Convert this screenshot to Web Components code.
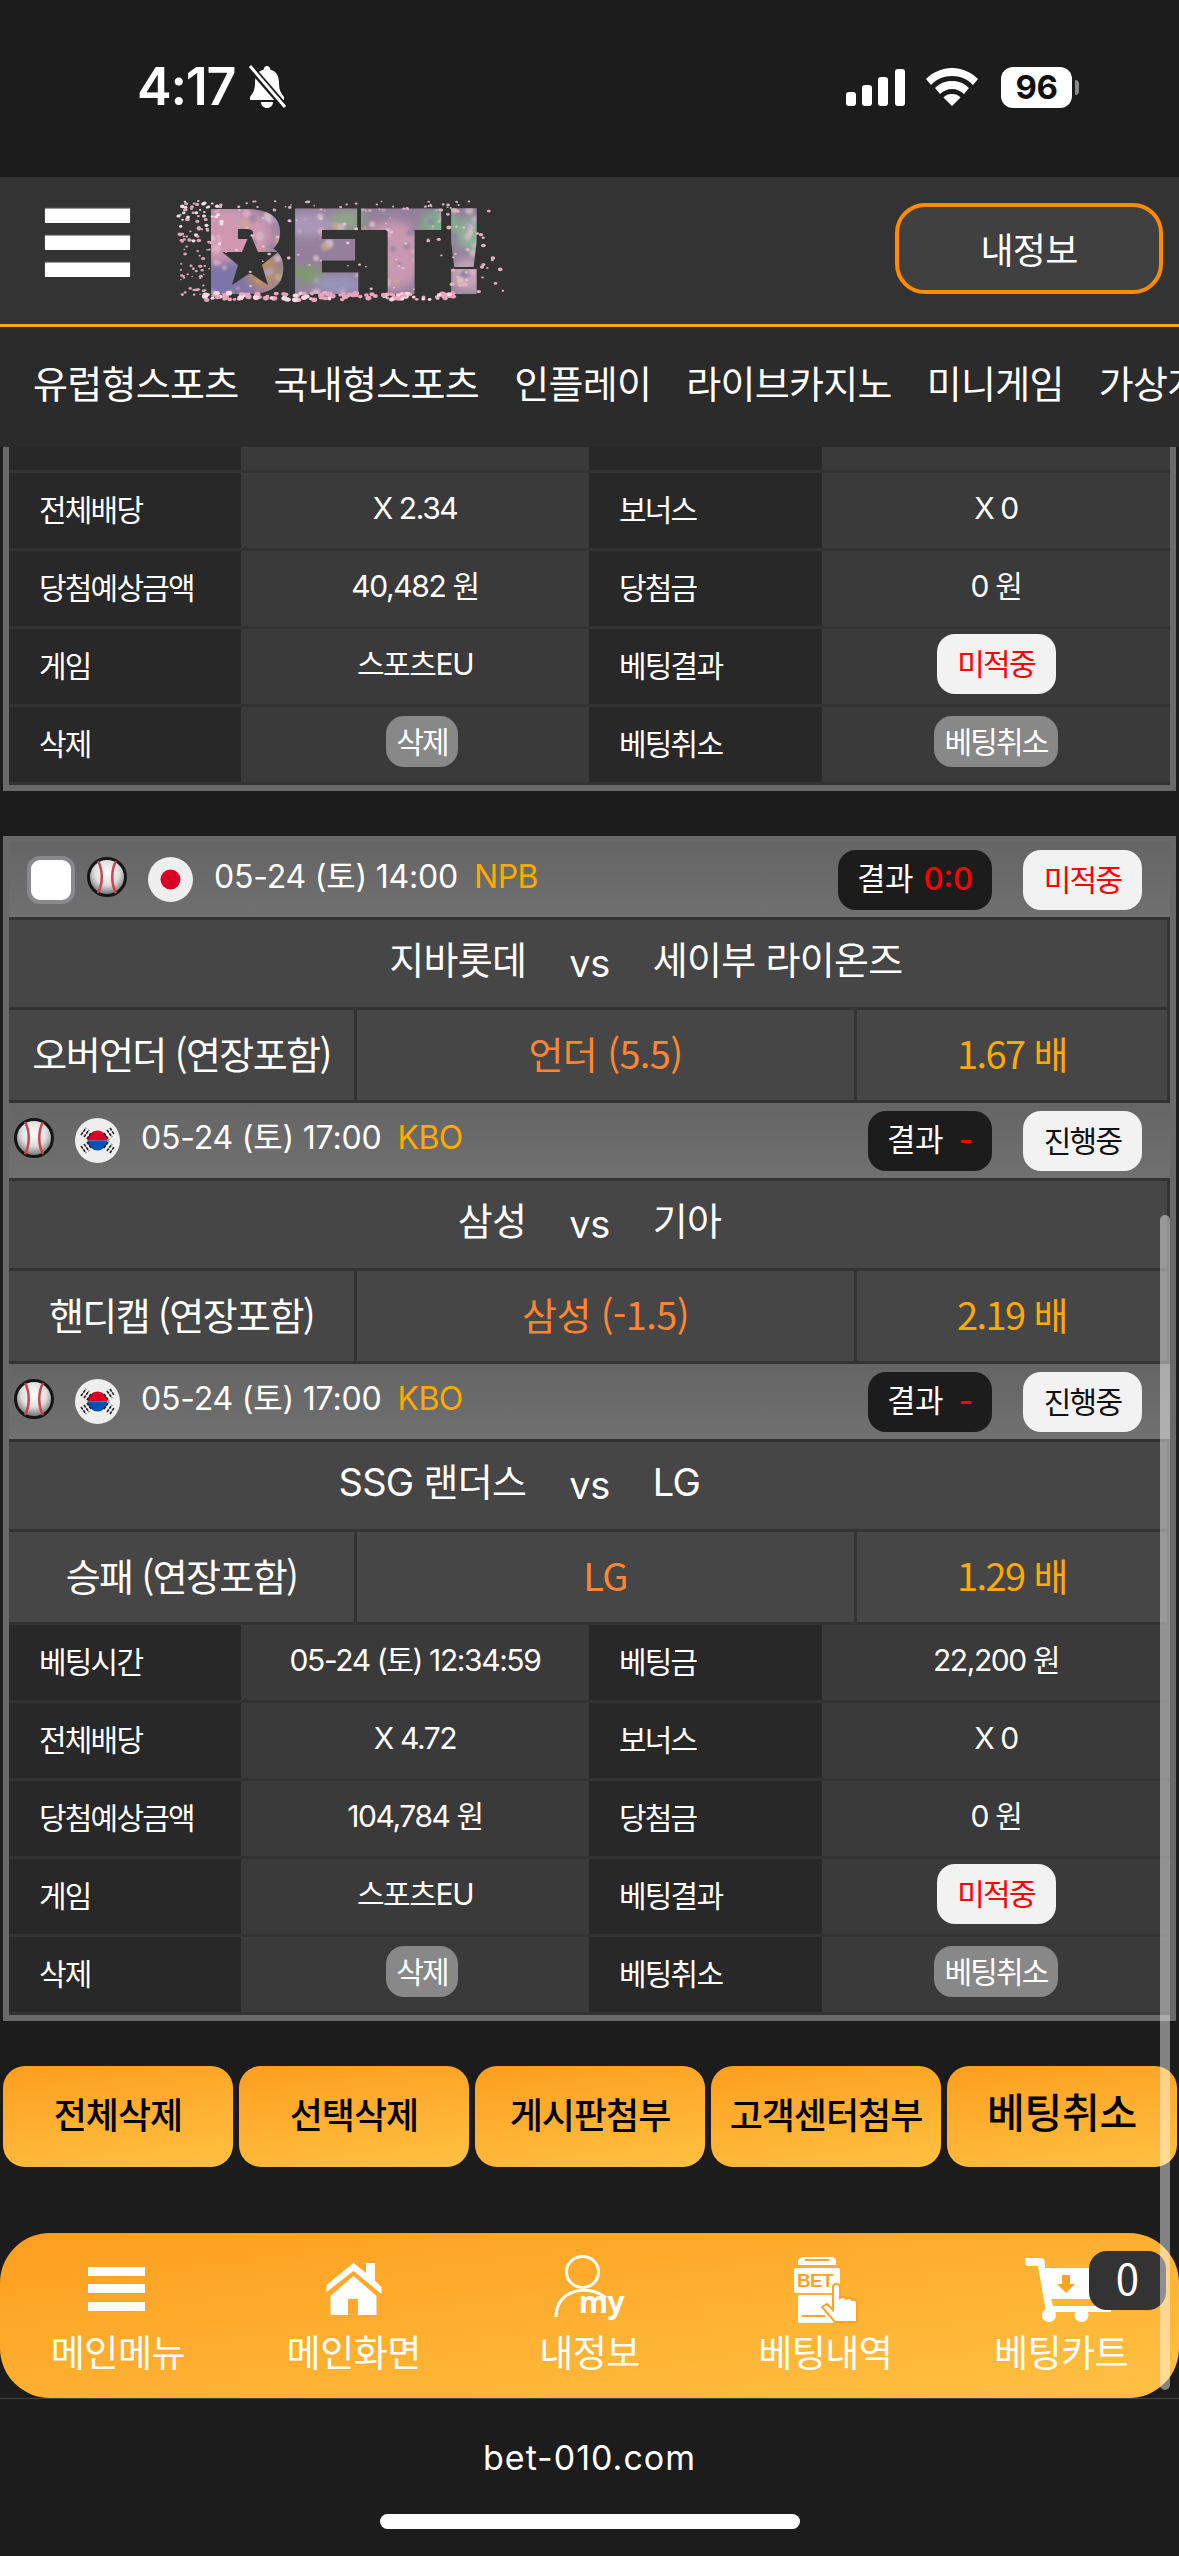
<!DOCTYPE html>
<html lang="ko">
<head>
<meta charset="utf-8">
<title>bet-010.com</title>
<style>
html, body { margin: 0; padding: 0; background: #1c1c1c; }
body {
    width: 1179px;
    height: 2556px;
    overflow: hidden;
    position: relative;
    color: #fff;
    font-family: "Noto Sans CJK KR", "Noto Sans", sans-serif;
}
</style>
</head>
<body>

<status-bar></status-bar>
<site-header></site-header>
<main-nav>
    <span>유럽형스포츠</span><span>국내형스포츠</span><span>인플레이</span><span>라이브카지노</span><span>미니게임</span><span>가상게임</span>
</main-nav>

<bet-card class="first">
    <info-row short></info-row>
    <info-row>
        <info-cell label>전체배당</info-cell><info-cell>X 2.34</info-cell>
        <info-cell label>보너스</info-cell><info-cell>X 0</info-cell>
    </info-row>
    <info-row>
        <info-cell label>당첨예상금액</info-cell><info-cell>40,482 원</info-cell>
        <info-cell label>당첨금</info-cell><info-cell>0 원</info-cell>
    </info-row>
    <info-row>
        <info-cell label>게임</info-cell><info-cell>스포츠EU</info-cell>
        <info-cell label>베팅결과</info-cell><info-cell><pill-badge tone="miss">미적중</pill-badge></info-cell>
    </info-row>
    <info-row>
        <info-cell label>삭제</info-cell><info-cell><pill-badge tone="gray" class="nudge">삭제</pill-badge></info-cell>
        <info-cell label>베팅취소</info-cell><info-cell><pill-badge tone="gray">베팅취소</pill-badge></info-cell>
    </info-row>
</bet-card>

<bet-card class="second">
    <match-head check flag="jp" date="05-24 (토) 14:00" league="NPB" score="0:0" state="미적중" tone="miss"></match-head>
    <match-teams home="지바롯데" away="세이부 라이온즈"></match-teams>
    <match-pick market="오버언더 (연장포함)" pick="언더 (5.5)" odds="1.67 배"></match-pick>

    <match-head flag="kr" date="05-24 (토) 17:00" league="KBO" score="-" state="진행중" tone="live"></match-head>
    <match-teams home="삼성" away="기아"></match-teams>
    <match-pick market="핸디캡 (연장포함)" pick="삼성 (-1.5)" odds="2.19 배"></match-pick>

    <match-head flag="kr" date="05-24 (토) 17:00" league="KBO" score="-" state="진행중" tone="live"></match-head>
    <match-teams home="SSG 랜더스" away="LG"></match-teams>
    <match-pick market="승패 (연장포함)" pick="LG" odds="1.29 배"></match-pick>

    <info-row>
        <info-cell label>베팅시간</info-cell><info-cell>05-24 (토) 12:34:59</info-cell>
        <info-cell label>베팅금</info-cell><info-cell>22,200 원</info-cell>
    </info-row>
    <info-row>
        <info-cell label>전체배당</info-cell><info-cell>X 4.72</info-cell>
        <info-cell label>보너스</info-cell><info-cell>X 0</info-cell>
    </info-row>
    <info-row>
        <info-cell label>당첨예상금액</info-cell><info-cell>104,784 원</info-cell>
        <info-cell label>당첨금</info-cell><info-cell>0 원</info-cell>
    </info-row>
    <info-row>
        <info-cell label>게임</info-cell><info-cell>스포츠EU</info-cell>
        <info-cell label>베팅결과</info-cell><info-cell><pill-badge tone="miss">미적중</pill-badge></info-cell>
    </info-row>
    <info-row>
        <info-cell label>삭제</info-cell><info-cell><pill-badge tone="gray" class="nudge">삭제</pill-badge></info-cell>
        <info-cell label>베팅취소</info-cell><info-cell><pill-badge tone="gray">베팅취소</pill-badge></info-cell>
    </info-row>
</bet-card>

<action-bar>
    <action-button>전체삭제</action-button>
    <action-button>선택삭제</action-button>
    <action-button>게시판첨부</action-button>
    <action-button>고객센터첨부</action-button>
    <action-button big>베팅취소</action-button>
</action-bar>

<bottom-nav></bottom-nav>
<url-bar>bet-010.com</url-bar>
<page-scrollbar></page-scrollbar>

<script>
const KR_FONT = '"Noto Sans CJK KR", "Noto Sans", sans-serif';
// digits and latin are wider on the site, hangul still falls through to noto
const NUM_FONT = 'Inter, "Noto Sans CJK KR", sans-serif';

// small helper, every element just sets its html once
class ShadowEl extends HTMLElement {
    render(html) {
        const root = this.shadowRoot || this.attachShadow({ mode: 'open' });
        root.innerHTML = html;
    }
}

class StatusBar extends ShadowEl {
    connectedCallback() {
        this.render(`
<style>
:host { display: flex; align-items: center; height: 177px; box-sizing: border-box; padding: 0 107px 3px 137px; background: #1c1c1c; }
.time { font: 600 52px/1 Inter, Roboto, sans-serif; letter-spacing: -1.2px; color: #fff; }
.bell { margin-left: 11px; }
.right { margin-left: auto; display: flex; align-items: center; }
.batt { position: relative; width: 71px; height: 41px; margin-left: 23px; border-radius: 12px; background: #fff; color: #111;
    display: flex; align-items: center; justify-content: center; font: 700 33px/1 Inter, Roboto, sans-serif; letter-spacing: -.5px; }
.batt::after { content: ""; position: absolute; left: 74px; top: 13px; width: 4px; height: 15px; border-radius: 0 4px 4px 0; background: #8a8a8a; }
</style>
<span class="time">4:17</span>
<svg class="bell" width="42" height="44" viewBox="0 0 42 44">
    <path d="M21 1c2 0 3 1.500 3.300 3.500C31 6.500 33 12 33 18c0 7 2 10 5 14v3H4v-3c3-4 5-7 5-14 0-6 2-11.500 8.700-13.500C18 2.500 19 1 21 1z" fill="#fff"/>
    <path d="M15 37h12c0 3.500-2.700 6-6 6s-6-2.500-6-6z" fill="#fff"/>
    <path d="M5 3l33 38" stroke="#1c1c1c" stroke-width="7"/>
    <path d="M4 1l35 41" stroke="#fff" stroke-width="3"/>
</svg>
<div class="right">
    <svg width="60" height="37" viewBox="0 0 60 37">
        <rect x="0" y="23" width="10" height="14" rx="3" fill="#fff"/>
        <rect x="16" y="16" width="10" height="21" rx="3" fill="#fff"/>
        <rect x="32" y="8" width="10" height="29" rx="3" fill="#fff"/>
        <rect x="49" y="0" width="10" height="37" rx="3" fill="#fff"/>
    </svg>
    <svg width="52" height="38" viewBox="0 0 52 38" style="margin-left:20px">
        <path d="M26 0C16 0 7 4 0 11l5 6c5.500-6 13-9 21-9s15.500 3 21 9l5-6C45 4 36 0 26 0z" fill="#fff"/>
        <path d="M26 13c-7 0-12.500 2.500-17 7l5 6c3-3 7.500-5 12-5s9 2 12 5l5-6c-4.500-4.500-10-7-17-7z" fill="#fff"/>
        <path d="M26 26c-3.500 0-6.500 1-8.500 3.500L26 38l8.500-8.500C32.500 27 29.500 26 26 26z" fill="#fff"/>
    </svg>
    <div class="batt">96</div>
</div>`);
    }
}

class BetLogo extends ShadowEl {
    connectedCallback() {
        // petals are scattered, a fixed seed keeps them the same on every load
        let seed = 7;
        const rnd = () => { seed = (seed * 16807) % 2147483647; return (seed % 10000) / 10000; };
        let petals = '';
        const add = (x, y, r, c) => { petals += `<ellipse cx="${x.toFixed(1)}" cy="${y.toFixed(1)}" rx="${(r * 1.3).toFixed(1)}" ry="${r.toFixed(1)}" fill="${c}"/>`; };
        for (let i = 0; i < 130; i++) add(24 + rnd() * 255, 93 + rnd() * 7, 1.3 + rnd() * 1.2, rnd() > .3 ? '#e8a4bc' : '#f7dbe4');
        for (let i = 0; i < 70; i++) add(rnd() * 44, 1 + rnd() * 44, .9 + rnd(), rnd() > .4 ? '#d9a8ba' : '#f3e3e8');
        for (let i = 0; i < 45; i++) add(40 + rnd() * 270, 1 + rnd() * 10, .7 + rnd() * .7, '#d8b4c2');
        for (let i = 0; i < 40; i++) add(2 + rnd() * 30, 45 + rnd() * 50, .7 + rnd() * .9, '#d8a8ba');
        for (let i = 0; i < 36; i++) add(250 + rnd() * 76, 10 + rnd() * 82, .9 + rnd() * 1.2, '#e6aec0');
        for (let i = 0; i < 40; i++) add(30 + rnd() * 260, 15 + rnd() * 75, .7 + rnd() * .8, '#e8c0d0');
        // blotches so the letters read like a photo and not a smooth gradient
        const tones = ['#e3b6c8', '#b2a0c6', '#d9c0cc', '#8f86a4', '#c9a98c', '#e9cfd8'];
        let blotches = '';
        for (let i = 0; i < 170; i++) {
            blotches += `<circle cx="${(rnd() * 327).toFixed(1)}" cy="${(rnd() * 103).toFixed(1)}" r="${(1.5 + rnd() * 3).toFixed(1)}" fill="${tones[Math.floor(rnd() * tones.length)]}" opacity=".7"/>`;
        }
        this.render(`
<style>:host { display: block; width: 327px; height: 103px; } svg { display: block; overflow: visible; }</style>
<svg width="327" height="103" viewBox="0 0 327 103">
    <defs>
        <filter id="soft"><feGaussianBlur stdDeviation="5"/></filter>
        <filter id="soft2"><feGaussianBlur stdDeviation="1"/></filter>
        <pattern id="photo" patternUnits="userSpaceOnUse" width="327" height="103">
            <rect width="327" height="103" fill="#94809c"/>
            <g filter="url(#soft)">
                <ellipse cx="50" cy="35" rx="45" ry="28" fill="#cf98b0"/>
                <ellipse cx="60" cy="80" rx="40" ry="20" fill="#7d74a8"/>
                <ellipse cx="85" cy="72" rx="16" ry="18" fill="#b88c68"/>
                <ellipse cx="130" cy="25" rx="30" ry="12" fill="#a897b6"/>
                <ellipse cx="170" cy="20" rx="18" ry="10" fill="#8ea488"/>
                <ellipse cx="125" cy="75" rx="22" ry="8" fill="#7f9c68"/>
                <ellipse cx="160" cy="85" rx="25" ry="9" fill="#9894bc"/>
                <ellipse cx="215" cy="55" rx="30" ry="35" fill="#c898b0"/>
                <ellipse cx="262" cy="24" rx="20" ry="12" fill="#7fb08a"/>
                <ellipse cx="295" cy="35" rx="16" ry="18" fill="#8cb494"/>
                <ellipse cx="290" cy="75" rx="18" ry="16" fill="#c8a4b6"/>
            </g>
            <g filter="url(#soft2)">${blotches}</g>
        </pattern>
    </defs>
    <text x="26" y="91" font-family="'DejaVu Sans'" font-weight="700" font-size="108" textLength="285" lengthAdjust="spacingAndGlyphs"
        fill="url(#photo)" stroke="url(#photo)" stroke-width="6" stroke-linejoin="miter">BET!</text>
    <polygon points="72,33 80,52 100,52 84,65 90,85 72,73 54,85 60,65 44,52 64,52" fill="#333"/>
    ${petals}
</svg>`);
    }
}

class SiteHeader extends ShadowEl {
    connectedCallback() {
        this.render(`
<style>
:host { display: flex; align-items: center; box-sizing: border-box; height: 150px; padding: 0 16px 3px 45px; background: #333; border-bottom: 3px solid #ffa800; }
.burger { display: flex; flex-direction: column; gap: 13px; width: 85px; margin-bottom: 12px; }
.burger i { display: block; height: 14px; background: #fff; box-shadow: 0 -1px 1px #999; }
bet-logo { margin-left: 48px; margin-top: 4px; }
.me { margin-left: auto; box-sizing: border-box; width: 268px; height: 91px; margin-bottom: 2px; border: 4px solid #ff8c00; border-radius: 30px; background: #404040;
    display: flex; align-items: center; justify-content: center; font: 400 36px/1 ${KR_FONT}; letter-spacing: -.8px; color: #fff; }
</style>
<div class="burger"><i></i><i></i><i></i></div>
<bet-logo></bet-logo>
<div class="me">내정보</div>`);
    }
}

class MainNav extends ShadowEl {
    connectedCallback() {
        this.render(`
<style>
:host { display: flex; align-items: center; gap: 35px; box-sizing: border-box; height: 120px; padding: 0 0 10px 33px; background: #2b2b2b;
    overflow: hidden; white-space: nowrap; font: 400 38px/1 ${KR_FONT}; letter-spacing: -.7px; color: #fff; }
</style>
<slot></slot>`);
    }
}

class BetCard extends ShadowEl {
    connectedCallback() {
        this.render(`
<style>
:host { display: block; margin: 0 3px; border: 6px solid #696969; background: #333; }
:host(.first) { border-top: 0; }
:host(.second) { margin-top: 45px; }
</style>
<slot></slot>`);
    }
}

class InfoRow extends ShadowEl {
    connectedCallback() {
        this.render(`
<style>
:host { display: grid; grid-template-columns: 232px 348px 233px 348px; height: 75px; margin-bottom: 3px; }
:host([short]) { height: 23px; background: linear-gradient(90deg, #282828 232px, #3a3a3a 232px 580px, #282828 580px 813px, #3a3a3a 813px); }
</style>
<slot></slot>`);
    }
}

class InfoCell extends ShadowEl {
    connectedCallback() {
        this.render(`
<style>
:host { display: flex; align-items: center; justify-content: center; background: #3a3a3a; color: #fff; font: 400 30px/1 ${NUM_FONT}; letter-spacing: -1.400px; white-space: nowrap; }
:host([label]) { justify-content: flex-start; padding-left: 30px; background: #282828; font-family: ${KR_FONT}; letter-spacing: -1.8px; }
.t { display: block; transform: translateY(-3px); }
</style>
<span class="t"><slot></slot></span>`);
    }
}

class PillBadge extends ShadowEl {
    connectedCallback() {
        this.render(`
<style>
:host { display: flex; align-items: center; justify-content: center; box-sizing: border-box; border-radius: 18px; padding-bottom: 3px; font: 400 30px/1 ${KR_FONT}; letter-spacing: -1.8px; }
:host([tone="miss"]) { width: 119px; height: 60px; background: #f2f2f2; color: #f00; }
:host([tone="live"]) { width: 119px; height: 60px; background: #f2f2f2; color: #111; }
:host([tone="gray"]) { height: 51px; padding: 0 10px 3px; background: #888; color: #fff; }
:host(.nudge) { margin-left: 14px; }
</style>
<slot></slot>`);
    }
}

const BALL_SVG = `<svg width="40" height="40" viewBox="0 0 40 40">
    <defs><radialGradient id="b" cx="50%" cy="38%" r="62%"><stop offset="0" stop-color="#fff"/><stop offset=".55" stop-color="#dedede"/><stop offset="1" stop-color="#666"/></radialGradient></defs>
    <circle cx="20" cy="20" r="18.500" fill="url(#b)" stroke="#161616" stroke-width="3"/>
    <path d="M11 4C16 13 16 27 11 36M29 4C24 13 24 27 29 36" fill="none" stroke="#c9444c" stroke-width="2.500"/>
</svg>`;

const FLAGS = {
    jp: `<circle cx="22.500" cy="22.500" r="22.500" fill="#eee"/><circle cx="22.500" cy="22.500" r="10" fill="#d80027"/>`,
    kr: `<circle cx="22.500" cy="22.500" r="22.500" fill="#eee"/>
        <path d="M12.500 22.500a10 10 0 0 1 20 0z" fill="#d80027"/><path d="M12.500 22.500a10 10 0 0 0 20 0z" fill="#0052b4"/>
        <g stroke="#222" stroke-width="1.600" stroke-dasharray="3 1">
            <path d="M6 17l5-7M9 19l5-7M12 21l4-6"/><path d="M29 15l5 7M32 12l5 7M35 10l4 6"/>
            <path d="M6 28l5 7M9 26l5 7M12 24l4 6"/><path d="M29 30l5-7M32 33l5-7M35 35l4-6"/>
        </g>`
};

class MatchHead extends ShadowEl {
    connectedCallback() {
        const check = this.hasAttribute('check');
        const live = this.getAttribute('tone') === 'live';
        this.render(`
<style>
:host { display: flex; align-items: center; height: 75px; margin-bottom: 3px; box-sizing: border-box; padding: 0 28px 0 ${check ? 18 : 5}px;
    background: linear-gradient(#656565, #707070); font: 400 32px/1 ${NUM_FONT}; color: #fff; }
.check { box-sizing: border-box; width: 48px; height: 48px; margin-right: 12px; border: 4px solid #8a8a8e; border-radius: 13px; background: #fff; }
.ball { display: block; flex: none; }
.flag { display: block; flex: none; margin: 0 21px; }
.date { letter-spacing: -.200px; white-space: nowrap; transform: translateY(-3px); }
.league { margin-left: 16px; color: #ffaa00; letter-spacing: -.5px; transform: translateY(-3px); }
.result { margin-left: auto; display: flex; align-items: center; justify-content: space-between; box-sizing: border-box; width: ${live ? 124 : 154}px; height: 60px; padding: 0 19px 3px; border-radius: 18px; background: #1c1c1c;
    font-size: 31px; letter-spacing: -.6px; }
.score { color: #f00; font-weight: 500; letter-spacing: 0; }
pill-badge { margin-left: 31px; }
</style>
${check ? '<div class="check"></div>' : ''}
<span class="ball">${BALL_SVG}</span>
<svg class="flag" width="45" height="45" viewBox="0 0 45 45">${FLAGS[this.getAttribute('flag')]}</svg>
<span class="date">${this.getAttribute('date')}</span>
<span class="league">${this.getAttribute('league')}</span>
<div class="result"><span>결과</span><span class="score">${this.getAttribute('score')}</span></div>
<pill-badge tone="${this.getAttribute('tone')}">${this.getAttribute('state')}</pill-badge>`);
    }
}

class MatchTeams extends ShadowEl {
    connectedCallback() {
        this.render(`
<style>
:host { display: grid; grid-template-columns: 1fr auto 1fr; gap: 43px; align-items: center; height: 87px; margin: 0 3px 3px 0; box-sizing: border-box; padding: 0 0 8px 3px;
    background: #464646; font: 400 38px/1 ${NUM_FONT}; letter-spacing: -.7px; color: #fff; white-space: nowrap; }
.home { text-align: right; }
.vs { font-size: 38px; letter-spacing: -.5px; transform: translateY(3px); }
</style>
<span class="home">${this.getAttribute('home')}</span>
<span class="vs">vs</span>
<span>${this.getAttribute('away')}</span>`);
    }
}

class MatchPick extends ShadowEl {
    connectedCallback() {
        this.render(`
<style>
:host { display: grid; grid-template-columns: 345px 497px 310px; gap: 3px; height: 90px; margin: 0 3px 3px 0; font: 400 38px/1 ${KR_FONT}; letter-spacing: -1.600px; white-space: nowrap; }
div { display: flex; align-items: center; justify-content: center; padding-bottom: 5px; background: #464646; color: #fff; }
.pick { color: #ff8533; letter-spacing: -.6px; }
.odds { color: #ffaa00; }
</style>
<div>${this.getAttribute('market')}</div>
<div class="pick">${this.getAttribute('pick')}</div>
<div class="odds">${this.getAttribute('odds')}</div>`);
    }
}

class ActionBar extends ShadowEl {
    connectedCallback() {
        this.render(`
<style>:host { display: grid; grid-template-columns: repeat(5, 230px); gap: 6px; margin: 45px 3px 66px; }</style>
<slot></slot>`);
    }
}

class ActionButton extends ShadowEl {
    connectedCallback() {
        this.render(`
<style>
:host { display: flex; align-items: center; justify-content: center; box-sizing: border-box; height: 101px; padding-bottom: 8px; border-radius: 22px;
    background: linear-gradient(172deg, #fd9e1f, #ffc142); color: #000; font: 500 36px/1 ${KR_FONT}; letter-spacing: -1px; white-space: nowrap; }
:host([big]) { font-size: 41px; letter-spacing: -.2px; padding-bottom: 12px; }
</style>
<slot></slot>`);
    }
}

const NAV_ICONS = {
    menu: `<rect x="10" y="13" width="57" height="9" fill="#fff"/><rect x="10" y="30" width="57" height="9" fill="#fff"/><rect x="10" y="48" width="57" height="9" fill="#fff"/>`,
    home: `<path d="M12.500 31L39.500 9L52 19V9H61V27L67.500 33V40L39.500 17L12.500 38Z" fill="#fff"/>
        <path d="M39.500 22L62.500 42V61H44V45H34V61H16.500V42Z" fill="#fff"/>`,
    user: `<ellipse cx="33.500" cy="18" rx="16" ry="15.500" fill="none" stroke="#fff" stroke-width="3"/>
        <path d="M7 63C7 48 16 38 33 36C42 36 50 38 57 44" fill="none" stroke="#fff" stroke-width="3"/>
        <text x="30" y="59" font-family="'Noto Sans','DejaVu Sans',sans-serif" font-weight="700" font-size="31" textLength="45" lengthAdjust="spacingAndGlyphs" fill="#fff">my</text>`,
    bets: `<path d="M13 11V6L17 3H48L51 6V11Z" fill="#fff"/><path d="M20 6H44" stroke="#fda426" stroke-width="2"/>
        <rect x="9" y="14" width="46" height="25" rx="2" fill="#fff"/>
        <text x="12" y="33" font-family="'Liberation Sans',sans-serif" font-weight="700" font-size="19" textLength="36" lengthAdjust="spacingAndGlyphs" fill="#fda426">BET</text>
        <rect x="13" y="41" width="36" height="28" rx="2" fill="#fff"/><path d="M17 62H40" stroke="#fda426" stroke-width="2"/>
        <path d="M37 53L42 50L48 56V33C48 29 55 29 55 33V44C58 42 60 43 61 45C64 43 66 44 67 46C70 45 72 47 72 50V68H50Z" fill="#fff" stroke="#fda426" stroke-width="2"/>`,
    cart: `<path d="M5 4H20C22 4 23 5 23.500 7L24 14H90V40L82 45H30L32 52H90V58H28C26 58 25 57 24.500 55L17 12H7C4 12 3 6 5 4Z" fill="#fff"/>
        <circle cx="28" cy="61" r="7" fill="#fff"/><circle cx="60.500" cy="61" r="7" fill="#fff"/>
        <path d="M41 21H49V30H54L45 39L36 30H41Z" fill="#fda426"/>`
};

class BottomNav extends ShadowEl {
    connectedCallback() {
        const items = [['menu', '메인메뉴'], ['home', '메인화면'], ['user', '내정보'], ['bets', '베팅내역'], ['cart', '베팅카트']];
        this.render(`
<style>
:host { display: grid; grid-template-columns: repeat(5, 1fr); position: relative; box-sizing: border-box; height: 165px; padding-top: 21px; border-radius: 50px;
    background: linear-gradient(172deg, #fd9e1f, #ffc142); }
.item { display: flex; flex-direction: column; align-items: center; color: #fff; font: 400 37px/1 ${KR_FONT}; letter-spacing: -.5px; }
svg { display: block; overflow: visible; margin-bottom: 9px; }
.count { position: absolute; left: 1089px; top: 18px; width: 77px; height: 59px; padding-bottom: 8px; box-sizing: border-box; border-radius: 18px; background: #333; color: #fff;
    display: flex; align-items: center; justify-content: center; font: 400 42px/1 ${KR_FONT}; }
</style>
${items.map(i => `<div class="item"><svg width="80" height="70" viewBox="0 0 80 70">${NAV_ICONS[i[0]]}</svg>${i[1]}</div>`).join('')}
<div class="count">0</div>`);
    }
}

class UrlBar extends ShadowEl {
    connectedCallback() {
        this.render(`
<style>
:host { display: block; box-sizing: border-box; height: 158px; border-top: 1px solid #444; background: #1c1c1c; text-align: center; position: relative; }
.url { padding-top: 39px; font: 400 34px/1.200 Inter, Roboto, sans-serif; letter-spacing: 1px; color: #fff; }
.home { position: absolute; left: 380px; top: 115px; width: 420px; height: 15px; border-radius: 8px; background: #fff; }
</style>
<div class="url"><slot></slot></div>
<div class="home"></div>`);
    }
}

class PageScrollbar extends ShadowEl {
    connectedCallback() {
        this.render(`
<style>:host { position: absolute; left: 1160px; top: 1215px; width: 10px; height: 1175px; border-radius: 5px; background: rgba(255,255,255,.45); }</style>`);
    }
}

customElements.define('status-bar', StatusBar);
customElements.define('bet-logo', BetLogo);
customElements.define('site-header', SiteHeader);
customElements.define('main-nav', MainNav);
customElements.define('bet-card', BetCard);
customElements.define('info-row', InfoRow);
customElements.define('info-cell', InfoCell);
customElements.define('pill-badge', PillBadge);
customElements.define('match-head', MatchHead);
customElements.define('match-teams', MatchTeams);
customElements.define('match-pick', MatchPick);
customElements.define('action-bar', ActionBar);
customElements.define('action-button', ActionButton);
customElements.define('bottom-nav', BottomNav);
customElements.define('url-bar', UrlBar);
customElements.define('page-scrollbar', PageScrollbar);
</script>
</body>
</html>
